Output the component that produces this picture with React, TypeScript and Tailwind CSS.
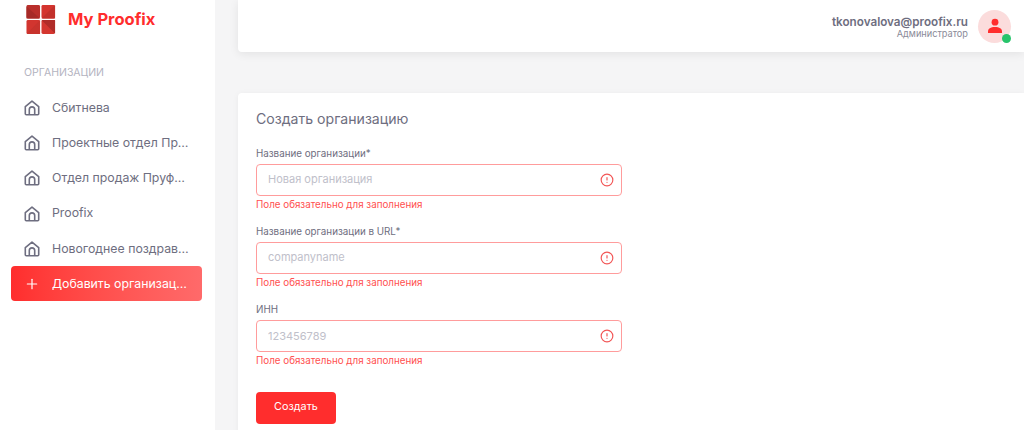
import { Plus, CircleAlert } from 'lucide-react'

const orgs = ['Сбитнева', 'Проектные отдел Пруфикс', 'Отдел продаж Пруфикс', 'Proofix', 'Новогоднее поздравление']

const fields = [
  { label: 'Название организации*', placeholder: 'Новая организация' },
  { label: 'Название организации в URL*', placeholder: 'companyname' },
  { label: 'ИНН', placeholder: '123456789' },
]

function HomeIcon() {
  return (
    <svg width="16" height="16" viewBox="0 0 16 16" fill="none" stroke="#6e6e80" strokeWidth="1.6" strokeLinejoin="round" className="shrink-0">
      <path d="M1.3 6.6 8 1.2l6.7 5.400v7.200a1 1 0 0 1-1 1H2.300a1 1 0 0 1-1-1z" />
      <path d="M5.300 14.800V9.600a2.700 2.700 0 0 1 5.400 0v5.200" />
    </svg>
  )
}

function Logo() {
  return (
    <svg width="30" height="31" viewBox="0 0 31 31" className="shrink-0">
      <rect x="0.500" y="0.500" width="14" height="14" rx="1.500" fill="#b92f2b" />
      <path d="M0.500 2 L14.500 14.500 L0.500 14.500 Z" fill="#a62a27" />
      <rect x="16" y="0.500" width="14" height="14" rx="1.500" fill="#d4342e" />
      <path d="M30 0.500 L16 14.500 L30 14.500 Z" fill="#c2302b" />
      <rect x="0.500" y="16" width="14" height="14.500" rx="1.500" fill="#d2352f" />
      <path d="M14.500 16 L0.500 30.500 L14.500 30.500 Z" fill="#c8332d" />
      <rect x="16" y="16" width="14" height="14.500" rx="1.500" fill="#d4362f" />
      <path d="M16 16 L30 30 L30 16 Z" fill="#b02c28" />
    </svg>
  )
}

function Sidebar() {
  return (
    <aside className="w-[215px] shrink-0 bg-white">
      <div className="flex items-center gap-[12px] pl-[26px] pt-[4px]">
        <Logo />
        <span className="mb-[1px] text-[16.500px] leading-[24px] font-bold text-[#ff2d2d]">My Proofix</span>
      </div>
      <div className="pl-[24px] pt-[31px] text-[10.500px] leading-[14px] text-[#b4b4bf]">ОРГАНИЗАЦИИ</div>
      <ul className="mt-[10.500px] pl-[11px] pr-[13px]">
        {orgs.map(name => (
          <li key={name} className="flex h-[35.200px] items-center gap-[12px] pl-[13px] pr-[13px] text-[12.300px] text-[#6e6e80]">
            <HomeIcon />
            <span className="truncate">{name}</span>
          </li>
        ))}
      </ul>
      <div className="pl-[11px] pr-[13px]">
        <button className="flex h-[35px] w-full items-center gap-[12px] rounded-[4px] bg-gradient-to-r from-[#ff2d2d] to-[#ff6a6a] pl-[13px] pr-[13px] text-[12.300px] text-white">
          <Plus size={16} strokeWidth={1.8} className="shrink-0" />
          <span className="truncate">Добавить организацию</span>
        </button>
      </div>
    </aside>
  )
}

function Header() {
  return (
    <header className="flex h-[52px] items-center justify-end rounded-bl-[4px] bg-white pr-[13px] shadow-[0_2px_10px_rgba(0,0,0,0.08)]">
      <div className="mt-[3px] text-right">
        <div className="text-[11.700px] leading-[12px] font-semibold text-[#6e6e80]">tkonovalova@proofix.ru</div>
        <div className="text-[9.200px] leading-[11px] text-[#8a8a98]">Администратор</div>
      </div>
      <div className="relative ml-[10px] flex h-[33px] w-[33px] items-center justify-center rounded-full bg-[#fbdcdc]">
        <svg width="16" height="16" viewBox="0 0 16 16" fill="#ff2d2d">
          <circle cx="8" cy="4.200" r="3.400" />
          <path d="M1 15v-1.600C1 10.600 3.600 9 8 9s7 1.600 7 4.400V15z" />
        </svg>
        <span className="absolute right-0 bottom-0 h-[9px] w-[9px] rounded-full bg-[#27c46b]" />
      </div>
    </header>
  )
}

function Field({ label, placeholder }: { label: string; placeholder: string }) {
  return (
    <div className="h-[78.200px]">
      <label className="block text-[9.800px] leading-[14px] text-[#6e6e80]">{label}</label>
      <div className="mt-[3px] flex h-[32px] w-[366px] items-center justify-between rounded-[4px] border border-[#ff9c9c] pl-[11px] pr-[7px]">
        <span className="-mt-[1px] text-[11px] text-[#c0c0ca]">{placeholder}</span>
        <CircleAlert size={14} strokeWidth={2} className="text-[#f25555]" />
      </div>
      <div className="mt-[2px] text-[9.800px] leading-[14px] text-[#ff5050]">Поле обязательно для заполнения</div>
    </div>
  )
}

export default function App() {
  return (
    <div className="flex h-[430px] w-[1024px] overflow-hidden bg-[#f5f5f6] font-['Inter',sans-serif]">
      <Sidebar />
      <main className="ml-[23px] flex-1">
        <Header />
        <section className="mt-[41px] h-[400px] rounded-tl-[4px] bg-white pl-[18px] pt-[16px] shadow-[0_1px_6px_rgba(0,0,0,0.05)]">
          <h1 className="text-[14.100px] leading-[20px] text-[#6e6e80]">Создать организацию</h1>
          <div className="mt-[18px]">
            {fields.map(f => <Field key={f.label} {...f} />)}
          </div>
          <button className="mt-[10px] h-[32px] w-[80px] rounded-[4px] bg-[#ff2d2d] text-[10.800px] text-white">Создать</button>
        </section>
      </main>
    </div>
  )
}
